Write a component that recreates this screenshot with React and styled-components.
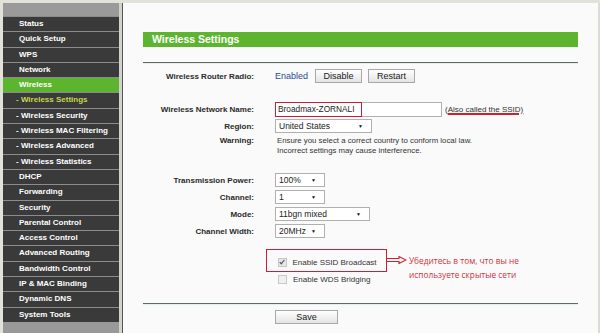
import React from "react";
import styled, { createGlobalStyle } from "styled-components";

const GlobalStyle = createGlobalStyle`
    html, body {
        margin: 0;
        padding: 0;
        background: #e2e2da;
    }
    body {
        font-family: "Liberation Sans", Arial, sans-serif;
    }
`

const Page = styled.div`
    display: flex;
    width: 600px;
    height: 333px;
    padding-top: 3px;
    box-sizing: border-box;
    overflow: hidden;
`

const Sidebar = styled.div`
    display: flex;
    flex-direction: column;
    width: 116px;
    margin-left: 3px;
    background: #999999;
`

const SideHead = styled.div`
    height: 13px;
    background: #9a9a9a;
`

const MenuItem = styled.div`
    height: 14.3px;
    border-top: 1px solid #8c8c8c;
    background: ${(p) => (p.$active ? "#5db42f" : "#3a3a3a")};
    color: ${(p) => (p.$current ? "#c6d84c" : "#ffffff")};
    font-size: 8px;
    font-weight: bold;
    line-height: 14.3px;
    padding-left: ${(p) => (p.$sub ? "13px" : "16px")};
    white-space: nowrap;
`

const Gutter = styled.div`
    width: 3px;
    background: #d2d2cc;
    border-right: 1px solid #555;
`

const Main = styled.div`
    flex: 1;
    background: #fafafa;
    border-right: 2px solid #dcdcd6;
    padding: 29px 20px 0 20px;
    display: flex;
    flex-direction: column;
`

const TitleBar = styled.div`
    height: 15px;
    background: #5db42f;
    color: #fff;
    font-size: 10.5px;
    font-weight: bold;
    line-height: 15px;
    padding-left: 9px;
`

const Divider = styled.div`
    margin-top: ${(p) => p.$mt}px;
    height: 0;
    border-top: 1px solid #5f6a66;
    border-bottom: 1px solid #e4f0ec;
`

const Row = styled.div`
    display: grid;
    grid-template-columns: 111px 1fr;
    column-gap: 21px;
    align-items: ${(p) => (p.$top ? "start" : "center")};
    margin-top: ${(p) => p.$mt}px;
    height: ${(p) => p.$h || 14}px;
    font-size: 8px;
    color: #333;
`

const Label = styled.div`
    text-align: right;
    font-weight: bold;
    color: #2a2a2a;
    line-height: ${(p) => (p.$top ? "10px" : "normal")};
`

const Value = styled.div`
    display: flex;
    align-items: center;
    gap: 6px;
    height: 100%;
`

const Enabled = styled.span`
    color: #2b4a8c;
    font-size: 9px;
    margin-right: 1px;
`

const Button = styled.div`
    width: ${(p) => p.$w}px;
    height: 14px;
    box-sizing: border-box;
    border: 1px solid #a8a8a8;
    background: linear-gradient(#ffffff, #e4e4e4);
    color: #222;
    font-size: 9px;
    line-height: 12px;
    text-align: center;
`

const TextInput = styled.div`
    display: flex;
    width: 167px;
    height: 15px;
    box-sizing: border-box;
    border: 1px solid #b0b0b0;
    background: #fff;
`

const Highlight = styled.div`
    width: 87px;
    height: 15px;
    margin: -1px;
    box-sizing: border-box;
    border: 1.5px solid #c8203a;
    padding-left: 2px;
    font-size: 8.3px;
    line-height: 12px;
    color: #222;
`

const Hint = styled.span`
    margin-left: -3px;
    color: #333;
`

const Underlined = styled.span`
    text-decoration: underline;
    text-decoration-color: #d0202a;
    text-decoration-thickness: 1.5px;
    text-underline-offset: 1px;
`

const SelectBox = styled.div`
    position: relative;
    width: ${(p) => p.$w}px;
    height: 14px;
    box-sizing: border-box;
    border: 1px solid #b0b0b0;
    background: #fff;
    font-size: 8.5px;
    line-height: 12px;
    padding-left: 3px;
    color: #222;
`

const Caret = styled.span`
    position: absolute;
    right: 8px;
    top: 0;
    font-size: 5px;
    line-height: 12px;
    color: #111;
`

const Warning = styled.div`
    font-size: 7.8px;
    line-height: 10px;
    padding-left: 2px;
    color: #333;
`

const CheckGroup = styled.div`
    display: flex;
    align-items: flex-start;
    height: 23px;
    margin-top: ${(p) => p.$mt}px;
    margin-left: 123px;
`

const RedBox = styled.div`
    display: flex;
    align-items: center;
    width: 121px;
    height: 23px;
    box-sizing: border-box;
    border: 1.5px solid #c8203a;
    padding: 3px 0 0 10.5px;
    gap: 6px;
    font-size: 8px;
    color: #333;
`

const CheckRow = styled.div`
    display: flex;
    align-items: center;
    gap: 6px;
    height: 14px;
    margin-left: 135px;
    font-size: 8px;
    color: #333;
`

const Box = styled.span`
    display: inline-flex;
    align-items: center;
    justify-content: center;
    width: 7px;
    height: 7px;
    border: 1px solid #c8c8c8;
    background: ${(p) => (p.$checked ? "#e6e6e6" : "#f0f0f0")};
`

const Arrow = styled.svg`
    margin-top: 7px;
    flex: none;
`

const Note = styled.div`
    margin-top: 5px;
    margin-left: 2px;
    font-family: "Open Sans", "Noto Sans", sans-serif;
    font-size: 8.3px;
    line-height: 14px;
    color: #d2303c;
    white-space: nowrap;
`

const SaveRow = styled.div`
    margin-top: 5px;
    margin-left: 132px;
`

const menu = [
    { t: "Status" },
    { t: "Quick Setup" },
    { t: "WPS" },
    { t: "Network" },
    { t: "Wireless", active: true },
    { t: "- Wireless Settings", sub: true, current: true },
    { t: "- Wireless Security", sub: true },
    { t: "- Wireless MAC Filtering", sub: true },
    { t: "- Wireless Advanced", sub: true },
    { t: "- Wireless Statistics", sub: true },
    { t: "DHCP" },
    { t: "Forwarding" },
    { t: "Security" },
    { t: "Parental Control" },
    { t: "Access Control" },
    { t: "Advanced Routing" },
    { t: "Bandwidth Control" },
    { t: "IP & MAC Binding" },
    { t: "Dynamic DNS" },
    { t: "System Tools" },
]

const Select = ({ w, children }) => (
    <SelectBox $w={w}>
        {children}
        <Caret>▼</Caret>
    </SelectBox>
)

const Check = ({ checked }) => (
    <Box $checked={checked}>
        {checked && (
            <svg width="6" height="6" viewBox="0 0 6 6">
                <path d="M0.8 3.2 L2.3 4.8 L5.3 1" fill="none" stroke="#555" strokeWidth="1.2" />
            </svg>
        )}
    </Box>
)

const App = () => {
    return (
        <>
            <GlobalStyle />
            <Page>
                <Sidebar>
                    <SideHead />
                    {menu.map((m) => (
                        <MenuItem key={m.t} $active={m.active} $sub={m.sub} $current={m.current}>
                            {m.t}
                        </MenuItem>
                    ))}
                </Sidebar>
                <Gutter />
                <Main>
                    <TitleBar>Wireless Settings</TitleBar>
                    <Divider $mt={15} />

                    <Row $mt={5}>
                        <Label>Wireless Router Radio:</Label>
                        <Value>
                            <Enabled>Enabled</Enabled>
                            <Button $w={47}>Disable</Button>
                            <Button $w={47}>Restart</Button>
                        </Value>
                    </Row>

                    <Row $mt={19} $h={15}>
                        <Label>Wireless Network Name:</Label>
                        <Value>
                            <TextInput>
                                <Highlight>Broadmax-ZORNALI</Highlight>
                            </TextInput>
                            <Hint>(<Underlined>Also called the SSID)</Underlined></Hint>
                        </Value>
                    </Row>

                    <Row $mt={2}>
                        <Label>Region:</Label>
                        <Value>
                            <Select w={97}>United States</Select>
                        </Value>
                    </Row>

                    <Row $mt={3} $h={20} $top>
                        <Label $top>Warning:</Label>
                        <Warning>
                            Ensure you select a correct country to conform local law.
                            <br />
                            Incorrect settings may cause interference.
                        </Warning>
                    </Row>

                    <Row $mt={17}>
                        <Label>Transmission Power:</Label>
                        <Value>
                            <Select w={50}>100%</Select>
                        </Value>
                    </Row>
                    <Row $mt={3}>
                        <Label>Channel:</Label>
                        <Value>
                            <Select w={50}>1</Select>
                        </Value>
                    </Row>
                    <Row $mt={3}>
                        <Label>Mode:</Label>
                        <Value>
                            <Select w={95}>11bgn mixed</Select>
                        </Value>
                    </Row>
                    <Row $mt={3}>
                        <Label>Channel Width:</Label>
                        <Value>
                            <Select w={50}>20MHz</Select>
                        </Value>
                    </Row>

                    <CheckGroup $mt={11}>
                        <RedBox>
                            <Check checked />
                            Enable SSID Broadcast
                        </RedBox>
                        <Arrow width="20" height="8" viewBox="0 0 20 8">
                            <path d="M0 2.5 H12 V0.5 L19 4 L12 7.5 V5.5 H0" fill="none" stroke="#d0202a" strokeWidth="1.1" />
                        </Arrow>
                        <Note>
                            Убедитесь в том, что вы не
                            <br />
                            используете скрытые сети
                        </Note>
                    </CheckGroup>
                    <CheckRow>
                        <Check />
                        Enable WDS Bridging
                    </CheckRow>

                    <Divider $mt={17} />
                    <SaveRow>
                        <Button $w={63}>Save</Button>
                    </SaveRow>
                </Main>
            </Page>
        </>
    )
}

export default App;
